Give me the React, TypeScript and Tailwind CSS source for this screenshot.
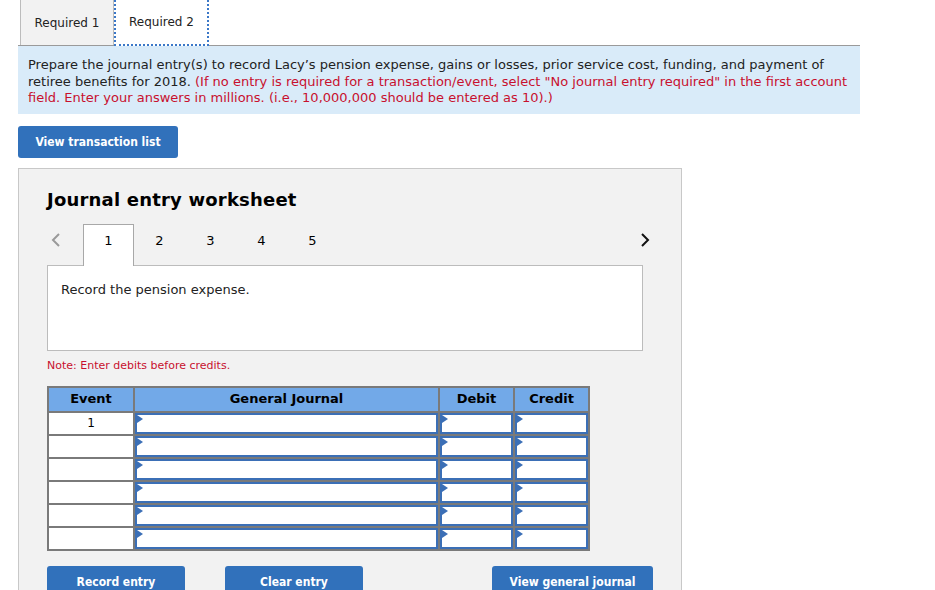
import React from "react";

const font = "font-['Verdana','DejaVu_Sans',sans-serif]";
const btnFont = "font-['DejaVu_Sans_Condensed','DejaVu_Sans',sans-serif]";

function InputCell() {
  return (
    <div className="relative h-[21px] border-2 border-[#3b6fb6] bg-white">
      <svg className="absolute left-0 top-0" width="6" height="8" viewBox="0 0 6 8">
        <polygon points="0,0 6,4 0,8" fill="#3b6fb6" />
      </svg>
    </div>
  );
}

export default function App() {
  const rows = [0, 1, 2, 3, 4, 5];
  const btn = `block h-[32px] rounded-[3px] bg-[#3171bb] text-white text-[12px] leading-[32px] font-bold ${btnFont}`;
  return (
    <div className={`w-[935px] h-[590px] overflow-hidden bg-white text-black ${font}`}>
      <div className="pl-[18px] w-[860px]">
        {/* Tabs */}
        <div className="flex pl-[2px] h-[45px]">
          <div className="w-[94px] h-[45px] bg-[#f2f2f2] border-x border-[#bcbcbc] flex items-center justify-center text-[12px] text-[#222] pt-[1px]">
            Required 1
          </div>
          <div className="w-[95px] h-[46px] bg-white border-x-2 border-b-2 border-dotted border-[#3b78c8] flex items-center justify-center text-[12px] text-[#222]">
            Required 2
          </div>
        </div>
        {/* Info box */}
        <div className="bg-[#d9ebf9] border-t border-[#9a9a9a] px-[10px] pt-[11px] pb-[7px] text-[13px] leading-[16.5px] text-[#222]">
          Prepare the journal entry(s) to record Lacy’s pension expense, gains or losses, prior service cost, funding, and payment of retiree benefits for 2018.{" "}
          <span className="text-[#c8102e]">
            (If no entry is required for a transaction/event, select "No journal entry required" in the first account field. Enter your answers in millions. (i.e., 10,000,000 should be entered as 10).)
          </span>
        </div>
        {/* Button */}
        <div className="pt-[12px]">
          <button className={`w-[160px] ${btn}`}>View transaction list</button>
        </div>
        {/* Worksheet panel */}
        <div className="mt-[10px] w-[664px] h-[440px] bg-[#f2f2f2] border border-[#c8c8c8] pl-[28px] pt-[19px]">
          <div className="text-[18px] font-bold leading-[24px] tracking-[0.2px]">Journal entry worksheet</div>
          {/* nav row */}
          <div className="mt-[12px] w-[606px] flex items-end relative">
            <div className="w-[36px] h-[41px] flex items-center pl-[4px] pb-[10px]">
              <svg width="10" height="16" viewBox="0 0 10 16">
                <polyline points="8,2 2,8 8,14" fill="none" stroke="#9a9a9a" strokeWidth="2" />
              </svg>
            </div>
            <div className="w-[51px] h-[42px] bg-white border border-b-0 border-[#a8a8a8] flex items-center justify-center text-[13px] pb-[9px] relative z-10">
              1
            </div>
            {["2", "3", "4", "5"].map((n) => (
              <div key={n} className="w-[51px] h-[41px] flex items-center justify-center text-[13px] pb-[9px]">
                {n}
              </div>
            ))}
            <div className="flex-1" />
            <div className="h-[41px] flex items-center pb-[10px] pr-[3px]">
              <svg width="10" height="16" viewBox="0 0 10 16">
                <polyline points="2,2 8,8 2,14" fill="none" stroke="#111" strokeWidth="2" />
              </svg>
            </div>
          </div>
          <div className="-mt-[1px] w-[596px] h-[86px] bg-white border border-[#bcbcbc] pl-[13px] pt-[14px] text-[13px] text-[#222]">
            Record the pension expense.
          </div>
          <div className="mt-[8px] text-[11px] text-[#c8102e] leading-[14px]">Note: Enter debits before credits.</div>
          {/* Table */}
          <table className="mt-[13px] border-collapse border-2 border-[#7a7a7a] bg-white">
            <thead>
              <tr className="bg-[#72a9e8] text-[13px] font-bold">
                <th className="w-[86px] h-[25px] p-0 border-2 border-[#7a7a7a] font-bold">Event</th>
                <th className="w-[305px] h-[25px] p-0 border-2 border-[#7a7a7a] font-bold">General Journal</th>
                <th className="w-[75px] h-[25px] p-0 border-2 border-[#7a7a7a] font-bold">Debit</th>
                <th className="w-[75px] h-[25px] p-0 border-2 border-[#7a7a7a] font-bold">Credit</th>
              </tr>
            </thead>
            <tbody>
              {rows.map((r) => (
                <tr key={r}>
                  <td className="border-2 border-[#7a7a7a] p-0 text-center text-[12px] leading-[21px] align-middle">
                    {r === 0 ? "1" : ""}
                  </td>
                  <td className="border-2 border-[#7a7a7a] p-0">
                    <InputCell />
                  </td>
                  <td className="border-2 border-[#7a7a7a] p-0">
                    <InputCell />
                  </td>
                  <td className="border-2 border-[#7a7a7a] p-0">
                    <InputCell />
                  </td>
                </tr>
              ))}
            </tbody>
          </table>
          {/* Buttons */}
          <div className="mt-[15px] flex">
            <button className={`w-[138px] ${btn}`}>Record entry</button>
            <button className={`ml-[40px] w-[138px] ${btn}`}>Clear entry</button>
            <button className={`ml-[129px] w-[161px] ${btn}`}>View general journal</button>
          </div>
        </div>
      </div>
    </div>
  );
}
